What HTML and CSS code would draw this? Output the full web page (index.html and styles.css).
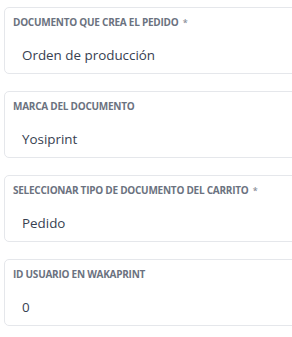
FILE: index.html
```html
<!DOCTYPE html>
<html lang="es">
<head>
<meta charset="utf-8">
<link rel="stylesheet" href="styles.css">
</head>
<body>
<div class="form">
  <div class="field">
    <div class="label">Documento que crea el pedido <span class="req">*</span></div>
    <div class="value">Orden de producción</div>
  </div>
  <div class="field">
    <div class="label">Marca del documento</div>
    <div class="value">Yosiprint</div>
  </div>
  <div class="field">
    <div class="label">Seleccionar tipo de documento del carrito <span class="req">*</span></div>
    <div class="value">Pedido</div>
  </div>
  <div class="field">
    <div class="label">ID usuario en Wakaprint</div>
    <div class="value">0</div>
  </div>
</div>
</body>
</html>
```
FILE: styles.css
```css
html, body {
  margin: 0;
  padding: 0;
  background: #ffffff;
  overflow: hidden;
}
.form {
  padding: 7px 0 0 4px;
  display: flex;
  flex-direction: column;
  gap: 17px;
  width: 320px;
}
.field {
  border: 1px solid #e5e7eb;
  border-radius: 5px;
  height: 67px;
  box-sizing: border-box;
  padding: 8px 0 0 8px;
  font-family: "Open Sans", sans-serif;
}
.label {
  font-size: 10px;
  font-weight: 700;
  text-transform: uppercase;
  color: #6b7280;
  line-height: 13px;
  letter-spacing: -0.25px;
}
.req {
  margin-left: 2px;
  font-size: 9px;
  font-weight: 600;
  color: #8a909a;
}
.value {
  margin-top: 17px;
  padding-left: 9px;
  font-size: 13.4px;
  color: #374151;
  line-height: 19px;
}
```
